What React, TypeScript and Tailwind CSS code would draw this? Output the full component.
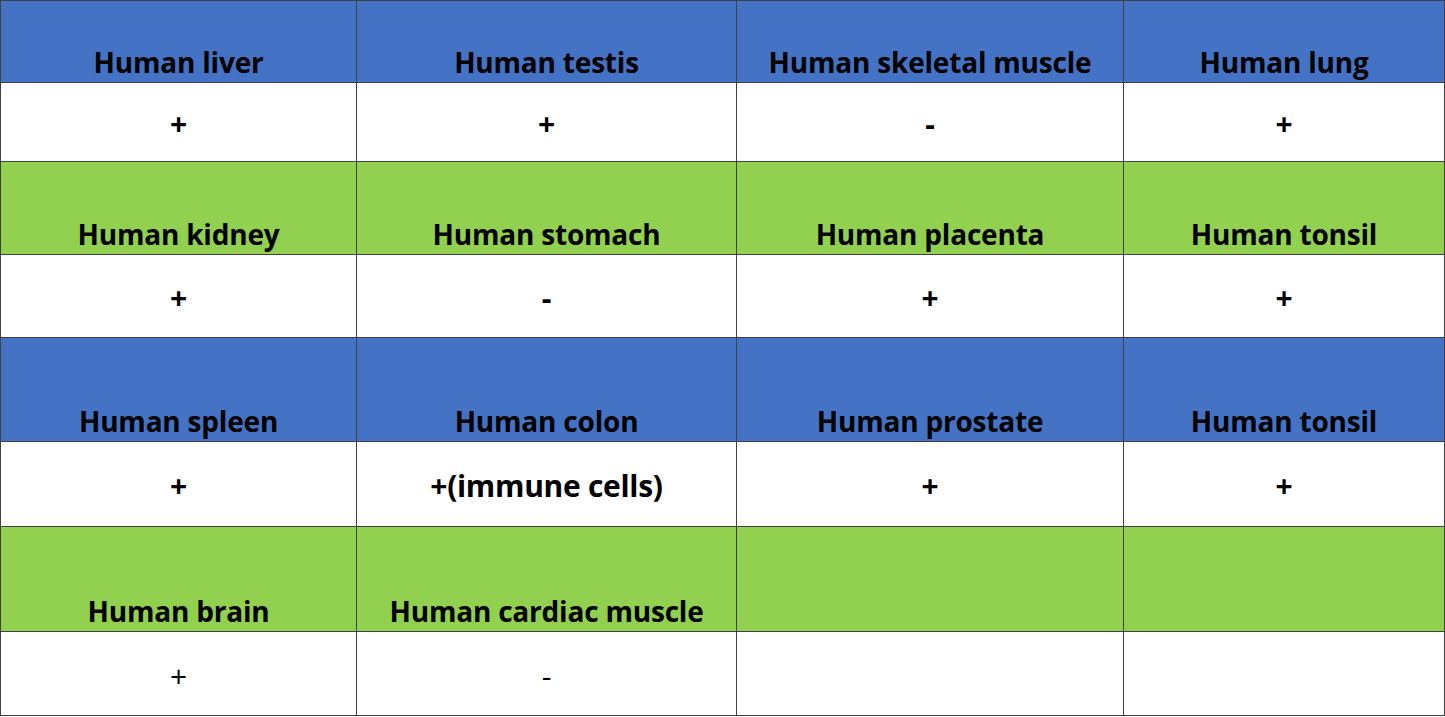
import React from "react";

type Row = { heads: string[]; vals: string[]; color: "blue" | "green"; hh: string; vh: string; light?: boolean };

const rows: Row[] = [
  { heads: ["Human liver", "Human testis", "Human skeletal muscle", "Human lung"], vals: ["+", "+", "-", "+"], color: "blue", hh: "h-[82px]", vh: "h-[79px]" },
  { heads: ["Human kidney", "Human stomach", "Human placenta", "Human tonsil"], vals: ["+", "-", "+", "+"], color: "green", hh: "h-[93px]", vh: "h-[83px]" },
  { heads: ["Human spleen", "Human colon", "Human prostate", "Human tonsil"], vals: ["+", "+(immune cells)", "+", "+"], color: "blue", hh: "h-[104px]", vh: "h-[85px]" },
  { heads: ["Human brain", "Human cardiac muscle", "", ""], vals: ["+", "-", "", ""], color: "green", hh: "h-[105px]", vh: "h-[84px]", light: true },
];

export default function App() {
  return (
    <div className="bg-white w-[1445px] h-[717px] font-['Open_Sans',sans-serif] text-black">
      <table className="border-collapse table-fixed w-[1444px]">
        <colgroup>
          <col className="w-[356px]" />
          <col className="w-[380px]" />
          <col className="w-[387px]" />
          <col className="w-[321px]" />
        </colgroup>
        <tbody>
          {rows.map((r, i) => (
            <React.Fragment key={i}>
              <tr className={r.hh}>
                {r.heads.map((h, j) => (
                  <td
                    key={j}
                    className={`border border-[#404040] align-bottom text-center text-[28px] font-bold leading-none p-0 pb-[6px] tracking-[-0.2px] ${
                      r.color === "blue" ? "bg-[#4472c4]" : "bg-[#92d050]"
                    }`}
                  >
                    {h}
                  </td>
                ))}
              </tr>
              <tr className={r.vh}>
                {r.vals.map((v, j) => (
                  <td
                    key={j}
                    className={`border border-[#404040] bg-white align-middle text-center text-[30px] leading-none p-0 pt-[4px] tracking-[-0.3px] ${
                      r.light ? "font-normal" : "font-bold"
                    }`}
                  >
                    {v}
                  </td>
                ))}
              </tr>
            </React.Fragment>
          ))}
        </tbody>
      </table>
    </div>
  );
}
